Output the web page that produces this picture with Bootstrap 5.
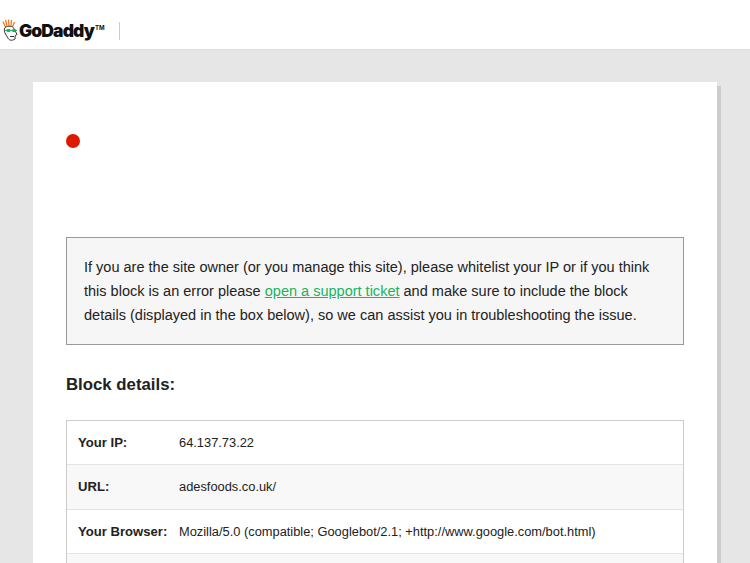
<!DOCTYPE html>
<html lang="en">
<head>
    <meta charset="UTF-8">
    <meta name="viewport" content="width=device-width, initial-scale=1.0">
    <title>Website Firewall - Access Denied</title>
    <link rel="stylesheet" href="https://cdn.jsdelivr.net/npm/bootstrap@5.3.0/dist/css/bootstrap.min.css">
    <style>
        html, body {
            height: 100%;
            overflow: hidden;
        }
        body {
            background: #e6e6e6;
            font-family: "Liberation Sans", Arial, sans-serif;
            color: #222;
        }
        .top-bar {
            background: #fff;
            height: 50px;
            border-bottom: 1px solid #dcdcdc;
            padding: 12px 0 0 2px;
        }
        .brand-name {
            font-family: "Inter", "Liberation Sans", sans-serif;
            font-weight: 900;
            font-size: 17.5px;
            letter-spacing: -0.9px;
            color: #111;
            line-height: 1;
            margin-left: 1px;
        }
        .brand-tm {
            font-size: 6px;
            font-weight: 700;
            letter-spacing: 0;
            vertical-align: 7px;
            margin-left: 1px;
        }
        .brand-rule {
            width: 1px;
            height: 18px;
            background: #ccc;
            margin-left: 14px;
        }
        .sheet {
            background: #fff;
            margin: 32px 33px 0;
            padding: 52px 33px 0;
            box-shadow: 4px 4px 0 #cdcdcd;
        }
        .red-dot {
            width: 14px;
            height: 14px;
            background: #dd1a00;
            border-radius: 50%;
            margin-bottom: 89px;
        }
        .notice-box {
            background: #f6f6f6;
            border: 1px solid #999;
            padding: 17px;
            font-size: 14.52px;
            line-height: 24px;
            margin-bottom: 28px;
        }
        .notice-box a {
            color: #1bb35c;
        }
        .details-title {
            font-size: 16.8px;
            font-weight: 700;
            line-height: 24px;
            margin-bottom: 23px;
        }
        .details-list {
            border: 1px solid #ccc;
            font-size: 12.85px;
        }
        .details-row {
            height: 44.33px;
            border-bottom: 1px solid #e4e4e4;
            padding-left: 11px;
        }
        .details-row:nth-child(even) {
            background: #f8f8f8;
        }
        .details-label {
            width: 101px;
            flex-shrink: 0;
            font-weight: 700;
            font-size: 13.1px;
        }
    </style>
</head>
<body>

    <div class="top-bar d-flex align-items-center">
        <svg width="16" height="23" viewBox="0 0 16 23" aria-hidden="true">
            <path d="M3.5 8 L1 2.5 M5 7 L3.5 1 M7 7 L6.5 0.5 M9 7 L9.5 1 M10.5 8 L12.5 3" stroke="#f47a20" stroke-width="1.3" fill="none"/>
            <path d="M3 8.5 C6 6.5 11 7 12 9.5 L15 15.5 L13.2 16.5 L13 20 C10 22 7 21.5 6 19 L4 16 C2 13 2 10 3 8.5 Z" fill="#fff" stroke="#333" stroke-width="1"/>
            <path d="M3 11.5 H15" stroke="#1bb35c" stroke-width="0.9"/>
            <rect x="4.5" y="10" width="4" height="3" rx="1.2" fill="#1bb35c"/>
            <rect x="10" y="10" width="4" height="3" rx="1.2" fill="#1bb35c"/>
            <path d="M8 17.5 H12" stroke="#333" stroke-width="1"/>
        </svg>
        <span class="brand-name">GoDaddy<span class="brand-tm">TM</span></span>
        <span class="brand-rule"></span>
    </div>

    <div class="sheet">
        <div class="red-dot"></div>

        <div class="notice-box">
            If you are the site owner (or you manage this site), please whitelist your IP or if you think this block is an error please <a href="#">open a support ticket</a> and make sure to include the block details (displayed in the box below), so we can assist you in troubleshooting the issue.
        </div>

        <div class="details-title">Block details:</div>

        <div class="details-list">
            <div class="details-row d-flex align-items-center">
                <div class="details-label">Your IP:</div>
                <div>64.137.73.22</div>
            </div>
            <div class="details-row d-flex align-items-center">
                <div class="details-label">URL:</div>
                <div>adesfoods.co.uk/</div>
            </div>
            <div class="details-row d-flex align-items-center">
                <div class="details-label">Your Browser:</div>
                <div>Mozilla/5.0 (compatible; Googlebot/2.1; +http://www.google.com/bot.html)</div>
            </div>
            <div class="details-row d-flex align-items-center"></div>
        </div>
    </div>

    <script src="https://cdn.jsdelivr.net/npm/bootstrap@5.3.0/dist/js/bootstrap.bundle.min.js"></script>
</body>
</html>
